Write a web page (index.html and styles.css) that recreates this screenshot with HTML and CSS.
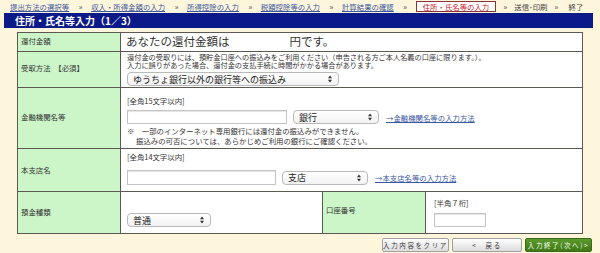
FILE: index.html
```html
<!DOCTYPE html>
<html lang="ja">
  <head>
    <meta charset="utf-8">
    <title>住所・氏名等入力</title>
    <link rel="stylesheet" href="styles.css">
  </head>
  <body>
<div class="crumbs">
  <a href="#">提出方法の選択等</a><span class="sep">»</span>
  <a href="#">収入・所得金額の入力</a><span class="sep">»</span>
  <a href="#">所得控除の入力</a><span class="sep">»</span>
  <a href="#">税額控除等の入力</a><span class="sep">»</span>
  <a href="#">計算結果の確認</a><span class="sep">»</span>
  <span class="current">住所・氏名等の入力</span><span class="sep tight">»</span>
  <span class="todo">送信･印刷</span><span class="sep last">»</span>
  <span class="todo">終了</span>
</div>

<h1 class="title">住所・氏名等入力（1／3）</h1>

<table class="form">
  <colgroup>
    <col class="c-label"><col class="c-value"><col class="c-label"><col class="c-value2">
  </colgroup>
  <tr class="r1">
    <th>還付金額</th>
    <td colspan="3" class="amount">あなたの還付金額は<span class="blank"></span>円です。</td>
  </tr>
  <tr class="r2">
    <th>受取方法　【必須】</th>
    <td colspan="3">
      <div class="note">還付金の受取りには、預貯金口座への振込みをご利用ください（申告される方ご本人名義の口座に限ります。）。</div>
      <div class="note">入力に誤りがあった場合、還付金の支払手続に時間がかかる場合があります。</div>
      <span class="select big"><span>ゆうちょ銀行以外の銀行等への振込み</span><svg width="4" height="8" viewBox="0 0 4 8"><path d="M0 3.2L2 0.6L4 3.2Z M0 4.8L2 7.4L4 4.8Z" fill="#333"/></svg></span>
    </td>
  </tr>
  <tr class="r3">
    <th>金融機関名等</th>
    <td colspan="3">
      <div class="hint">[全角15文字以内]</div>
      <div class="fields">
        <span class="input bank"></span>
        <span class="select mid"><span>銀行</span><svg width="4" height="8" viewBox="0 0 4 8"><path d="M0 3.2L2 0.6L4 3.2Z M0 4.8L2 7.4L4 4.8Z" fill="#333"/></svg></span>
        <a href="#">→金融機関名等の入力方法</a>
      </div>
      <div class="caution first"><span class="mark">※</span>　一部のインターネット専用銀行には還付金の振込みができません。</div>
      <div class="caution indent">振込みの可否については、あらかじめご利用の銀行にご確認ください。</div>
    </td>
  </tr>
  <tr class="r4">
    <th>本支店名</th>
    <td colspan="3">
      <div class="hint">[全角14文字以内]</div>
      <div class="fields">
        <span class="input branch"></span>
        <span class="select mid"><span>支店</span><svg width="4" height="8" viewBox="0 0 4 8"><path d="M0 3.2L2 0.6L4 3.2Z M0 4.8L2 7.4L4 4.8Z" fill="#333"/></svg></span>
        <a href="#">→本支店名等の入力方法</a>
      </div>
    </td>
  </tr>
  <tr class="r5">
    <th>預金種類</th>
    <td class="kind">
      <span class="select small"><span>普通</span><svg width="4" height="8" viewBox="0 0 4 8"><path d="M0 3.2L2 0.6L4 3.2Z M0 4.8L2 7.4L4 4.8Z" fill="#333"/></svg></span>
    </td>
    <th class="acct-label">口座番号</th>
    <td class="number">
      <div class="hint">[半角７桁]</div>
      <span class="input acct"></span>
    </td>
  </tr>
</table>

<div class="buttons">
  <button class="btn">入力内容をクリア</button>
  <button class="btn back">&lt;　戻る</button>
  <button class="btn next">入力終了(次へ)&gt;</button>
</div>
  </body>
</html>
```

FILE: styles.css
```css
body {
  margin: 0;
  background: #fdf5dc;
  color: #333;
  font-family: "Noto Sans CJK JP", "Noto Sans", sans-serif;
}

.crumbs { display: flex; align-items: center; height: 13px; padding-left: 10px; font-size: 7.4px; white-space: nowrap; }
.crumbs a { color: #3a57a0; text-decoration: underline; }
.crumbs .sep { flex: none; width: 22px; text-align: center; padding-left: 1px; box-sizing: border-box; color: #666; font-size: 7px; font-weight: bold; }
.crumbs .sep.tight { width: 18px; padding-left: 0; }
.crumbs .sep.last { width: 21px; text-align: left; padding-left: 7px; }
.crumbs .current { border: 1px solid #8c3434; background: #fff; color: #c8202e; padding: 0 6px; line-height: 9px; }
.crumbs .todo { color: #444; }

.title {
  margin: 0 7px 0 4px;
  height: 15px;
  line-height: 15px;
  padding-left: 11px;
  background: #0b1a88;
  color: #fff;
  font-size: 10px;
  font-weight: bold;
}

.form {
  margin: 4px 0 0 17px;
  width: 565px;
  table-layout: fixed;
  border-collapse: collapse;
  font-size: 7.4px;
}
.c-label { width: 103px; }
.c-value { width: 202px; }
.c-value2 { width: 157px; }

.form th, .form td { border: 1px solid #5a5a52; padding: 0; box-sizing: border-box; }
.form th {
  background: #ccf5c8;
  text-align: left;
  font-weight: normal;
  padding-left: 3px;
  vertical-align: top;
  line-height: 10px;
}
.form td { background: #fff; vertical-align: top; padding-left: 6px; }

.r1 > * { height: 19px; }
.r2 > * { height: 36px; }
.r3 > * { height: 61px; }
.r4 > * { height: 43px; }
.r5 > * { height: 42px; }

.r1 th { padding-top: 3px; }
.r2 th { padding-top: 11px; }
.r3 th { padding-top: 24px; }
.r4 th { padding-top: 16px; }
.r5 th { padding-top: 15px; }
.r5 th.acct-label { padding-top: 13px; }

.form td.amount { font-size: 11.5px; vertical-align: middle; padding-left: 5px; line-height: 1; }
.blank { display: inline-block; width: 60px; }

.r2 td { padding-top: 2px; }
.note { font-size: 7.2px; line-height: 7.5px; }
.r2 .select { margin-top: 3px; }

.r3 td { padding-top: 8px; }
.r4 td { padding-top: 3px; }
.hint { line-height: 10px; }
.fields { display: flex; align-items: center; gap: 6px; }
.r3 .fields { margin-top: 4px; }
.r4 .fields { margin-top: 8px; }
.fields a { color: #3a57a0; text-decoration: underline; margin-left: 1px; }
.caution { line-height: 9.5px; }
.caution.first { margin-top: 2px; }
.caution .mark { color: #333; }
.indent { padding-left: 9px; }

.form td.kind { padding-top: 21px; }
.form td.number { padding-top: 6px; padding-left: 8px; }
.number .input { margin-top: 5px; }

.input {
  display: block;
  height: 12px;
  border: 1px solid #c4c4c4;
  box-shadow: inset 0 1px 1px #e4e4e4;
  background: #fff;
}
.input.bank { width: 158px; }
.input.branch { width: 147px; height: 13px; }
.input.acct { width: 50px; height: 12px; }

.select {
  display: inline-flex;
  align-items: center;
  justify-content: space-between;
  box-sizing: border-box;
  height: 14px;
  padding: 0 6px 0 5px;
  border: 1px solid #b9b9b9;
  border-radius: 4px;
  background: linear-gradient(#fff, #f2f2f2);
  font-size: 9px;
  color: #222;
}
.select.big { width: 212px; }
.select.mid { width: 86px; }
.select.small { width: 84px; }

.buttons { display: flex; justify-content: flex-end; gap: 3px; padding-right: 8px; margin-top: 4px; }
.btn {
  height: 14px;
  padding: 0;
  border: 1px solid #a2a2a2;
  border-radius: 2px;
  background: linear-gradient(#fff, #dcdcdc);
  font-family: inherit;
  font-size: 6.5px;
  letter-spacing: 1.6px;
  color: #333;
}
.btn:first-child { width: 67px; }
.btn.back { width: 70px; }
.btn.next { width: 67px; background: linear-gradient(#5b9a2c, #3f7a16); border-color: #3a6a18; color: #fff; }
```
